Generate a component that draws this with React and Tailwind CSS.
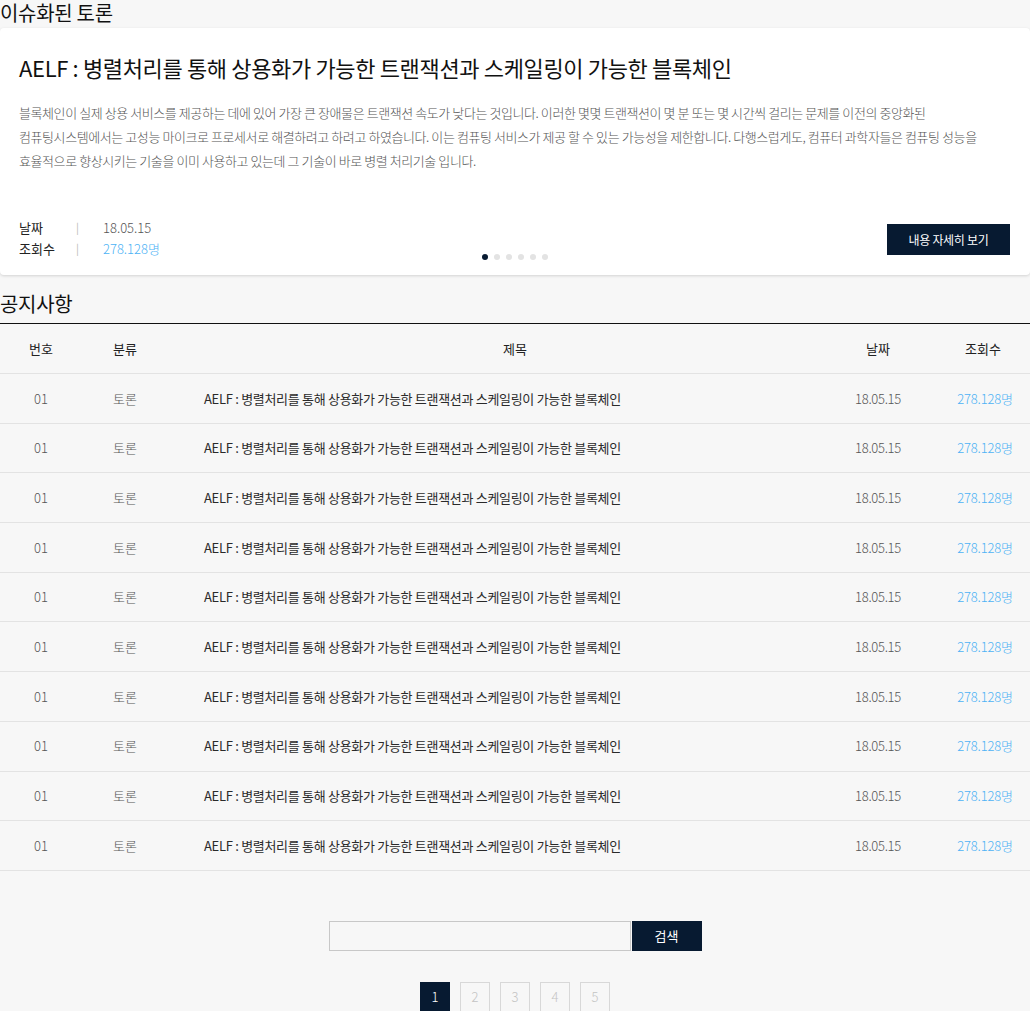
import React from "react";

const TITLE = "AELF : 병렬처리를 통해 상용화가 가능한 트랜잭션과 스케일링이 가능한 블록체인";

export default function App() {
  const rows = Array.from({ length: 10 });
  return (
    <div
      className="w-[1030px] min-h-[1011px] bg-[#f7f7f7] text-[#222]"
      style={{ fontFamily: '"Noto Sans CJK KR", "Noto Sans", sans-serif' }}
    >
      <h2 className="h-[28px] pt-[1px] text-[20px] leading-[24px] font-normal text-[#111] tracking-[-0.3px]">이슈화된 토론</h2>
      <div className="relative bg-white rounded-[4px] shadow-[0_1px_3px_rgba(0,0,0,0.15)] px-[19px] pt-[23px] pb-[16px]">
        <h1 className="text-[22px] leading-[32px] font-normal text-[#111] tracking-[-0.35px]">{TITLE}</h1>
        <p className="mt-[18px] text-[13px] leading-[24px] text-[#555] font-light tracking-[-0.42px] whitespace-nowrap">
          블록체인이 실제 상용 서비스를 제공하는 데에 있어 가장 큰 장애물은 트랜잭션 속도가 낮다는 것입니다. 이러한 몇몇 트랜잭션이 몇 분 또는 몇 시간씩 걸리는 문제를 이전의 중앙화된
          <br />
          컴퓨팅시스템에서는 고성능 마이크로 프로세서로 해결하려고 하려고 하였습니다. 이는 컴퓨팅 서비스가 제공 할 수 있는 가능성을 제한합니다. 다행스럽게도, 컴퓨터 과학자들은 컴퓨팅 성능을
          <br />
          효율적으로 향상시키는 기술을 이미 사용하고 있는데 그 기술이 바로 병렬 처리기술 입니다.
        </p>
        <div className="mt-[44px] flex items-end justify-between">
          <div className="text-[13px] leading-[21px]">
            <div className="flex">
              <span className="w-[57px] text-[#222]">날짜</span>
              <span className="w-[27px] text-[#bbb] text-[11px]">|</span>
              <span className="text-[#555] font-light">18.05.15</span>
            </div>
            <div className="flex">
              <span className="w-[57px] text-[#222]">조회수</span>
              <span className="w-[27px] text-[#bbb] text-[11px]">|</span>
              <span className="text-[#4cb2f5] font-light">278.128명</span>
            </div>
          </div>
          <button className="mb-[4px] w-[123px] h-[31px] bg-[#071a31] text-white text-[12px] mr-[1px] tracking-[-0.3px]">
            내용 자세히 보기
          </button>
        </div>
        <div className="absolute left-0 right-0 bottom-[15px] flex justify-center gap-[6px]">
          {[0, 1, 2, 3, 4, 5].map((i) => (
            <span
              key={i}
              className={
                "w-[6px] h-[6px] rounded-full " + (i === 0 ? "bg-[#071a31]" : "bg-[#e3e3e3]")
              }
            />
          ))}
        </div>
      </div>

      <h2 className="mt-[16px] h-[32px] text-[20px] leading-[26px] font-normal text-[#111] tracking-[-0.3px]">공지사항</h2>
      <div className="border-t border-[#111]">
        <div className="grid grid-cols-[82px_86px_652px_116px_94px] h-[50px] items-center border-b border-[#e3e3e3] text-[13px] text-[#222]">
          <div className="text-center">번호</div>
          <div className="text-center">분류</div>
          <div className="text-center pl-[42px]">제목</div>
          <div className="text-center">날짜</div>
          <div className="text-center">조회수</div>
        </div>
        {rows.map((_, i) => (
          <div
            key={i}
            className="grid grid-cols-[82px_86px_652px_116px_94px] h-[49.7px] items-center border-b border-[#e3e3e3] text-[13px]"
          >
            <div className="text-center text-[#555] font-light">01</div>
            <div className="text-center text-[#555] font-light">토론</div>
            <div className="pl-[36px] text-[#2a2a2a] tracking-[-0.3px]">{TITLE}</div>
            <div className="text-center text-[#555] font-light tracking-[-0.3px]">18.05.15</div>
            <div className="text-center pl-[4px] text-[#4cb2f5] font-light tracking-[-0.2px]">278.128명</div>
          </div>
        ))}
      </div>

      <div className="mt-[50px] flex justify-center">
        <input className="w-[302px] h-[30px] border border-[#c8c8c8] bg-[#f7f7f7] outline-none" />
        <button className="ml-[1px] w-[70px] h-[30px] bg-[#071a31] text-white text-[13px]">검색</button>
      </div>

      <div className="mt-[31px] flex justify-center gap-[10px]">
        {[1, 2, 3, 4, 5].map((n) => (
          <div
            key={n}
            className={
              "w-[30px] h-[30px] flex items-center justify-center text-[13px] font-light " +
              (n === 1 ? "bg-[#071a31] text-white" : "border border-[#d8d8d8] text-[#c4c4c4]")
            }
          >
            {n}
          </div>
        ))}
      </div>
    </div>
  );
}
